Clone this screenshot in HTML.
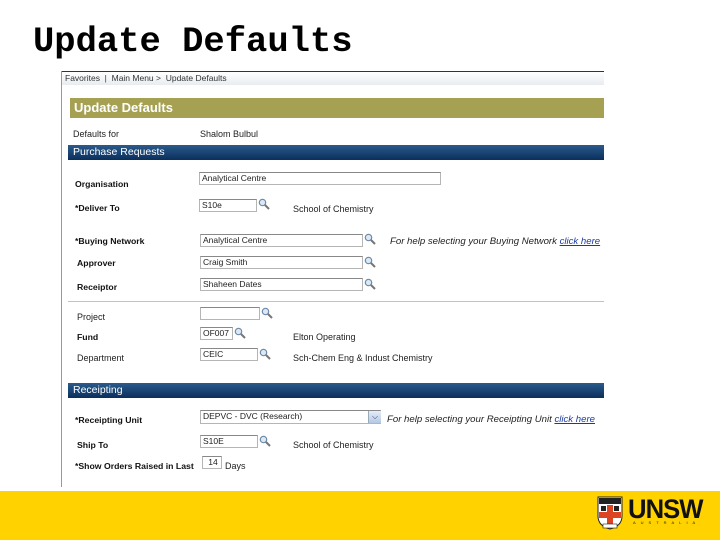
<!DOCTYPE html>
<html><head><style>
body{margin:0;width:720px;height:540px;background:#fff;position:relative;overflow:hidden;font-family:"Liberation Sans",Arial,sans-serif;}
.a{position:absolute;white-space:nowrap;}
.t{position:absolute;left:33px;top:21px;font-family:"Liberation Mono",monospace;font-weight:bold;font-size:35.5px;color:#000;}
.lbl{position:absolute;font-size:8.7px;font-weight:bold;color:#111;white-space:nowrap;}
.txt{position:absolute;font-size:9px;color:#222;white-space:nowrap;}
.in{position:absolute;border:1px solid #b5b5b5;border-top-color:#888;background:#fff;font-size:8.5px;color:#222;padding-left:2px;box-sizing:border-box;line-height:11px;}
.mg{position:absolute;width:12px;height:12px;}
.bar{position:absolute;left:68px;width:536px;height:15px;background:linear-gradient(#2a5a8c,#0a2f5c);color:#fff;font-size:10.5px;line-height:15px;padding-left:5px;box-sizing:border-box;}
.help{position:absolute;font-size:9.6px;font-style:italic;color:#222;white-space:nowrap;}
.help u{color:#1a3aa0;}
</style></head><body>
<div class="t">Update Defaults</div>
<div class="a" style="left:61px;top:71px;width:1px;height:416px;background:#999"></div>
<div class="a" style="left:62px;top:71px;width:542px;height:14px;background:linear-gradient(#fff,#e8ecf0);border-top:1px solid #333;font-size:8.5px;color:#333;line-height:12px;padding-left:3px;box-sizing:border-box">Favorites &nbsp;|&nbsp; Main Menu &gt; &nbsp;Update Defaults</div>
<div class="a" style="left:70px;top:98px;width:534px;height:20px;background:#a6a152;color:#fff;font-weight:bold;font-size:13px;line-height:20px;padding-left:4px;box-sizing:border-box">Update Defaults</div>
<div class="txt" style="left:73px;top:129px">Defaults for</div>
<div class="txt" style="left:200px;top:129px">Shalom Bulbul</div>
<div class="bar" style="top:145px">Purchase Requests</div>

<svg width="0" height="0" style="position:absolute"><defs><symbol id="m" viewBox="0 0 12 12"><circle cx="4.5" cy="4.5" r="3.2" fill="#dce8f4" stroke="#6d8aa8" stroke-width="1.2"/><path d="M7 7 L11 11" stroke="#777" stroke-width="2"/></symbol></defs></svg>

<div class="lbl" style="left:75px;top:179px">Organisation</div>
<div class="in" style="left:199px;top:172px;width:242px;height:13px">Analytical Centre</div>

<div class="lbl" style="left:75px;top:203px">*Deliver To</div>
<div class="in" style="left:199px;top:199px;width:58px;height:13px">S10e</div>
<svg class="mg" style="left:258px;top:198px"><use href="#m"/></svg>
<div class="txt" style="left:293px;top:204px">School of Chemistry</div>

<div class="lbl" style="left:75px;top:236px">*Buying Network</div>
<div class="in" style="left:200px;top:234px;width:163px;height:13px">Analytical Centre</div>
<svg class="mg" style="left:364px;top:233px"><use href="#m"/></svg>
<div class="help" style="left:390px;top:236px">For help selecting your Buying Network <u>click here</u></div>

<div class="lbl" style="left:77px;top:258px">Approver</div>
<div class="in" style="left:200px;top:256px;width:163px;height:13px">Craig Smith</div>
<svg class="mg" style="left:364px;top:256px"><use href="#m"/></svg>

<div class="lbl" style="left:77px;top:282px">Receiptor</div>
<div class="in" style="left:200px;top:278px;width:163px;height:13px">Shaheen Dates</div>
<svg class="mg" style="left:364px;top:278px"><use href="#m"/></svg>

<div class="a" style="left:68px;top:301px;width:536px;height:1px;background:#b8c4d0"></div>

<div class="txt" style="left:77px;top:312px">Project</div>
<div class="in" style="left:200px;top:307px;width:60px;height:13px"></div>
<svg class="mg" style="left:261px;top:307px"><use href="#m"/></svg>

<div class="lbl" style="left:77px;top:332px">Fund</div>
<div class="in" style="left:200px;top:327px;width:33px;height:13px">OF007</div>
<svg class="mg" style="left:234px;top:327px"><use href="#m"/></svg>
<div class="txt" style="left:293px;top:332px">Elton Operating</div>

<div class="txt" style="left:77px;top:353px">Department</div>
<div class="in" style="left:200px;top:348px;width:58px;height:13px">CEIC</div>
<svg class="mg" style="left:259px;top:348px"><use href="#m"/></svg>
<div class="txt" style="left:293px;top:353px">Sch-Chem Eng &amp; Indust Chemistry</div>

<div class="bar" style="top:383px">Receipting</div>

<div class="lbl" style="left:75px;top:415px">*Receipting Unit</div>
<div class="in" style="left:200px;top:410px;width:181px;height:14px">DEPVC - DVC (Research)</div>
<div class="a" style="left:368px;top:411px;width:12px;height:12px;background:linear-gradient(#e4ecf8,#b4c8e4);border-left:1px solid #9ab;color:#335;font-size:8px;text-align:center;line-height:12px">&#9013;</div>
<div class="help" style="left:387px;top:414px">For help selecting your Receipting Unit <u>click here</u></div>

<div class="lbl" style="left:77px;top:440px">Ship To</div>
<div class="in" style="left:200px;top:435px;width:58px;height:13px">S10E</div>
<svg class="mg" style="left:259px;top:435px"><use href="#m"/></svg>
<div class="txt" style="left:293px;top:440px">School of Chemistry</div>

<div class="lbl" style="left:75px;top:461px">*Show Orders Raised in Last</div>
<div class="in" style="left:202px;top:456px;width:20px;height:13px;text-align:center">14</div>
<div class="txt" style="left:225px;top:461px">Days</div>

<div class="a" style="left:0;top:491px;width:720px;height:49px;background:#ffd200"></div>
<svg class="a" style="left:597px;top:496px" width="26" height="34" viewBox="0 0 26 34">
<path d="M1 1 H25 V20 Q25 30 13 33 Q1 30 1 20 Z" fill="#fff" stroke="#222" stroke-width="1"/>
<rect x="2" y="2" width="22" height="6" fill="#222"/>
<rect x="10" y="9" width="6" height="22" fill="#d42"/>
<rect x="2" y="16" width="22" height="6" fill="#d42"/>
<rect x="4" y="10" width="5" height="5" fill="#222"/>
<rect x="17" y="10" width="5" height="5" fill="#222"/>
<rect x="6" y="28" width="14" height="4" fill="#fff" stroke="#222" stroke-width=".6"/>
</svg>
<div class="a" style="left:628px;top:494px;font-size:27px;font-weight:bold;color:#111;letter-spacing:-1px;transform:scaleX(0.95);transform-origin:left">UNSW</div>
<div class="a" style="left:633px;top:520px;font-size:4px;color:#222;letter-spacing:5px">AUSTRALIA</div>
</body></html>
